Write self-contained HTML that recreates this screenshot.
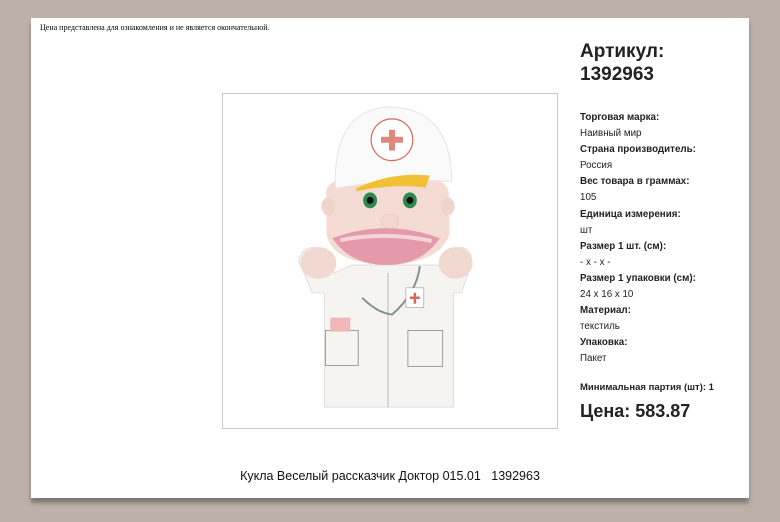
<!DOCTYPE html>
<html><head><meta charset="utf-8"><style>
body{margin:0;width:780px;height:522px;background:#bcb1a6;position:relative;overflow:hidden;font-family:"Liberation Sans",Arial,sans-serif;}
.page{position:absolute;left:31px;top:18px;width:718px;height:480px;background:#fff;box-shadow:0 5px 4px #7d7873;}
.note{position:absolute;left:9px;top:5px;font-family:"Liberation Serif",serif;font-size:8px;color:#000;}
.img{position:absolute;left:191px;top:75px;width:334px;height:334px;border:1px solid #c9c9c9;}
.side{position:absolute;left:549px;top:0;color:#222;}
.art{position:absolute;top:22px;font-size:19px;font-weight:bold;line-height:23px;width:200px;}
.props{position:absolute;top:92px;font-size:9.8px;line-height:16.1px;white-space:nowrap;}
.props b{font-weight:bold;}
.min{position:absolute;top:364px;font-size:9.5px;font-weight:bold;white-space:nowrap;}
.price{position:absolute;top:383px;font-size:18px;font-weight:bold;white-space:nowrap;}
.title{position:absolute;left:0;width:718px;top:451px;text-align:center;font-size:12.5px;color:#111;}
</style></head><body>
<div class="page">
<div class="note">Цена представлена для ознакомления и не является окончательной.</div>
<div class="img"><svg width="334" height="334" viewBox="0 0 336 336">
<path d="M76 168 Q80 152 95 155 L112 180 L130 172 L215 172 L228 180 L235 155 Q250 152 250 170 L240 200 L232 200 L232 315 L102 315 L102 200 L90 200 Z" fill="#f6f4f0" stroke="#ddd"/>
<ellipse cx="96" cy="170" rx="18" ry="16" fill="#f1d8d0"/>
<ellipse cx="234" cy="170" rx="17" ry="16" fill="#f1d8d0"/>
<rect x="103" y="238" width="33" height="35" fill="none" stroke="#888" stroke-width="0.8"/>
<rect x="186" y="238" width="35" height="36" fill="none" stroke="#888" stroke-width="0.8"/>
<path d="M166 180 L166 315" stroke="#bbb"/>
<path d="M198 173 Q195 200 170 222 Q155 220 140 205" fill="none" stroke="#7e9490" stroke-width="2"/>
<rect x="184" y="195" width="18" height="20" fill="#fff" stroke="#999" stroke-width="0.6"/>
<path d="M193 200v11M188 205h10" stroke="#d36a5a" stroke-width="2.5"/>
<rect x="108" y="225" width="20" height="14" fill="#efb7b8"/>
<path d="M104 102 Q100 80 165 80 Q230 80 227 102 L228 140 Q220 170 165 172 Q108 170 104 140 Z" fill="#f4dcd5"/>
<ellipse cx="106" cy="113" rx="7" ry="9" fill="#efd4cc"/>
<ellipse cx="226" cy="113" rx="7" ry="9" fill="#efd4cc"/>
<path d="M110 145 Q165 125 218 145 Q200 172 165 172 Q128 172 110 145Z" fill="#e49aab"/>
<path d="M118 147 Q165 138 210 148" stroke="#f5d6d8" stroke-width="4" fill="none"/>
<ellipse cx="168" cy="128" rx="9" ry="7" fill="#f3d7d0" stroke="#e6c4bb" stroke-width="0.6"/>
<ellipse cx="148" cy="107" rx="7" ry="8" fill="#2f8a50"/><circle cx="148" cy="107" r="3.5" fill="#111"/>
<ellipse cx="188" cy="107" rx="7" ry="8" fill="#2f8a50"/><circle cx="188" cy="107" r="3.5" fill="#111"/>
<path d="M113 90 Q112 15 168 13 Q230 15 230 88 Q172 84 113 95 Z" fill="#fafafa" stroke="#e4e4e4"/>
<path d="M134 95 Q170 78 208 82 L204 94 Q170 90 134 98Z" fill="#f1c034"/>
<circle cx="170" cy="46" r="21" fill="#fff" stroke="#d36a5a" stroke-width="1.2"/>
<path d="M170 36v21M159 46h22" stroke="#e0877b" stroke-width="6"/>
</svg></div>
<div class="side">
<div class="art">Артикул:<br>1392963</div>
<div class="props"><b>Торговая марка:</b><br>Наивный мир<br><b>Страна производитель:</b><br>Россия<br><b>Вес товара в граммах:</b><br>105<br><b>Единица измерения:</b><br>шт<br><b>Размер 1 шт. (см):</b><br>- x - x -<br><b>Размер 1 упаковки (см):</b><br>24 x 16 x 10<br><b>Материал:</b><br>текстиль<br><b>Упаковка:</b><br>Пакет</div>
<div class="min">Минимальная партия (шт): 1</div>
<div class="price">Цена: 583.87</div>
</div>
<div class="title">Кукла Веселый рассказчик Доктор 015.01&nbsp;&nbsp;&nbsp;1392963</div>
</div>
</body></html>
